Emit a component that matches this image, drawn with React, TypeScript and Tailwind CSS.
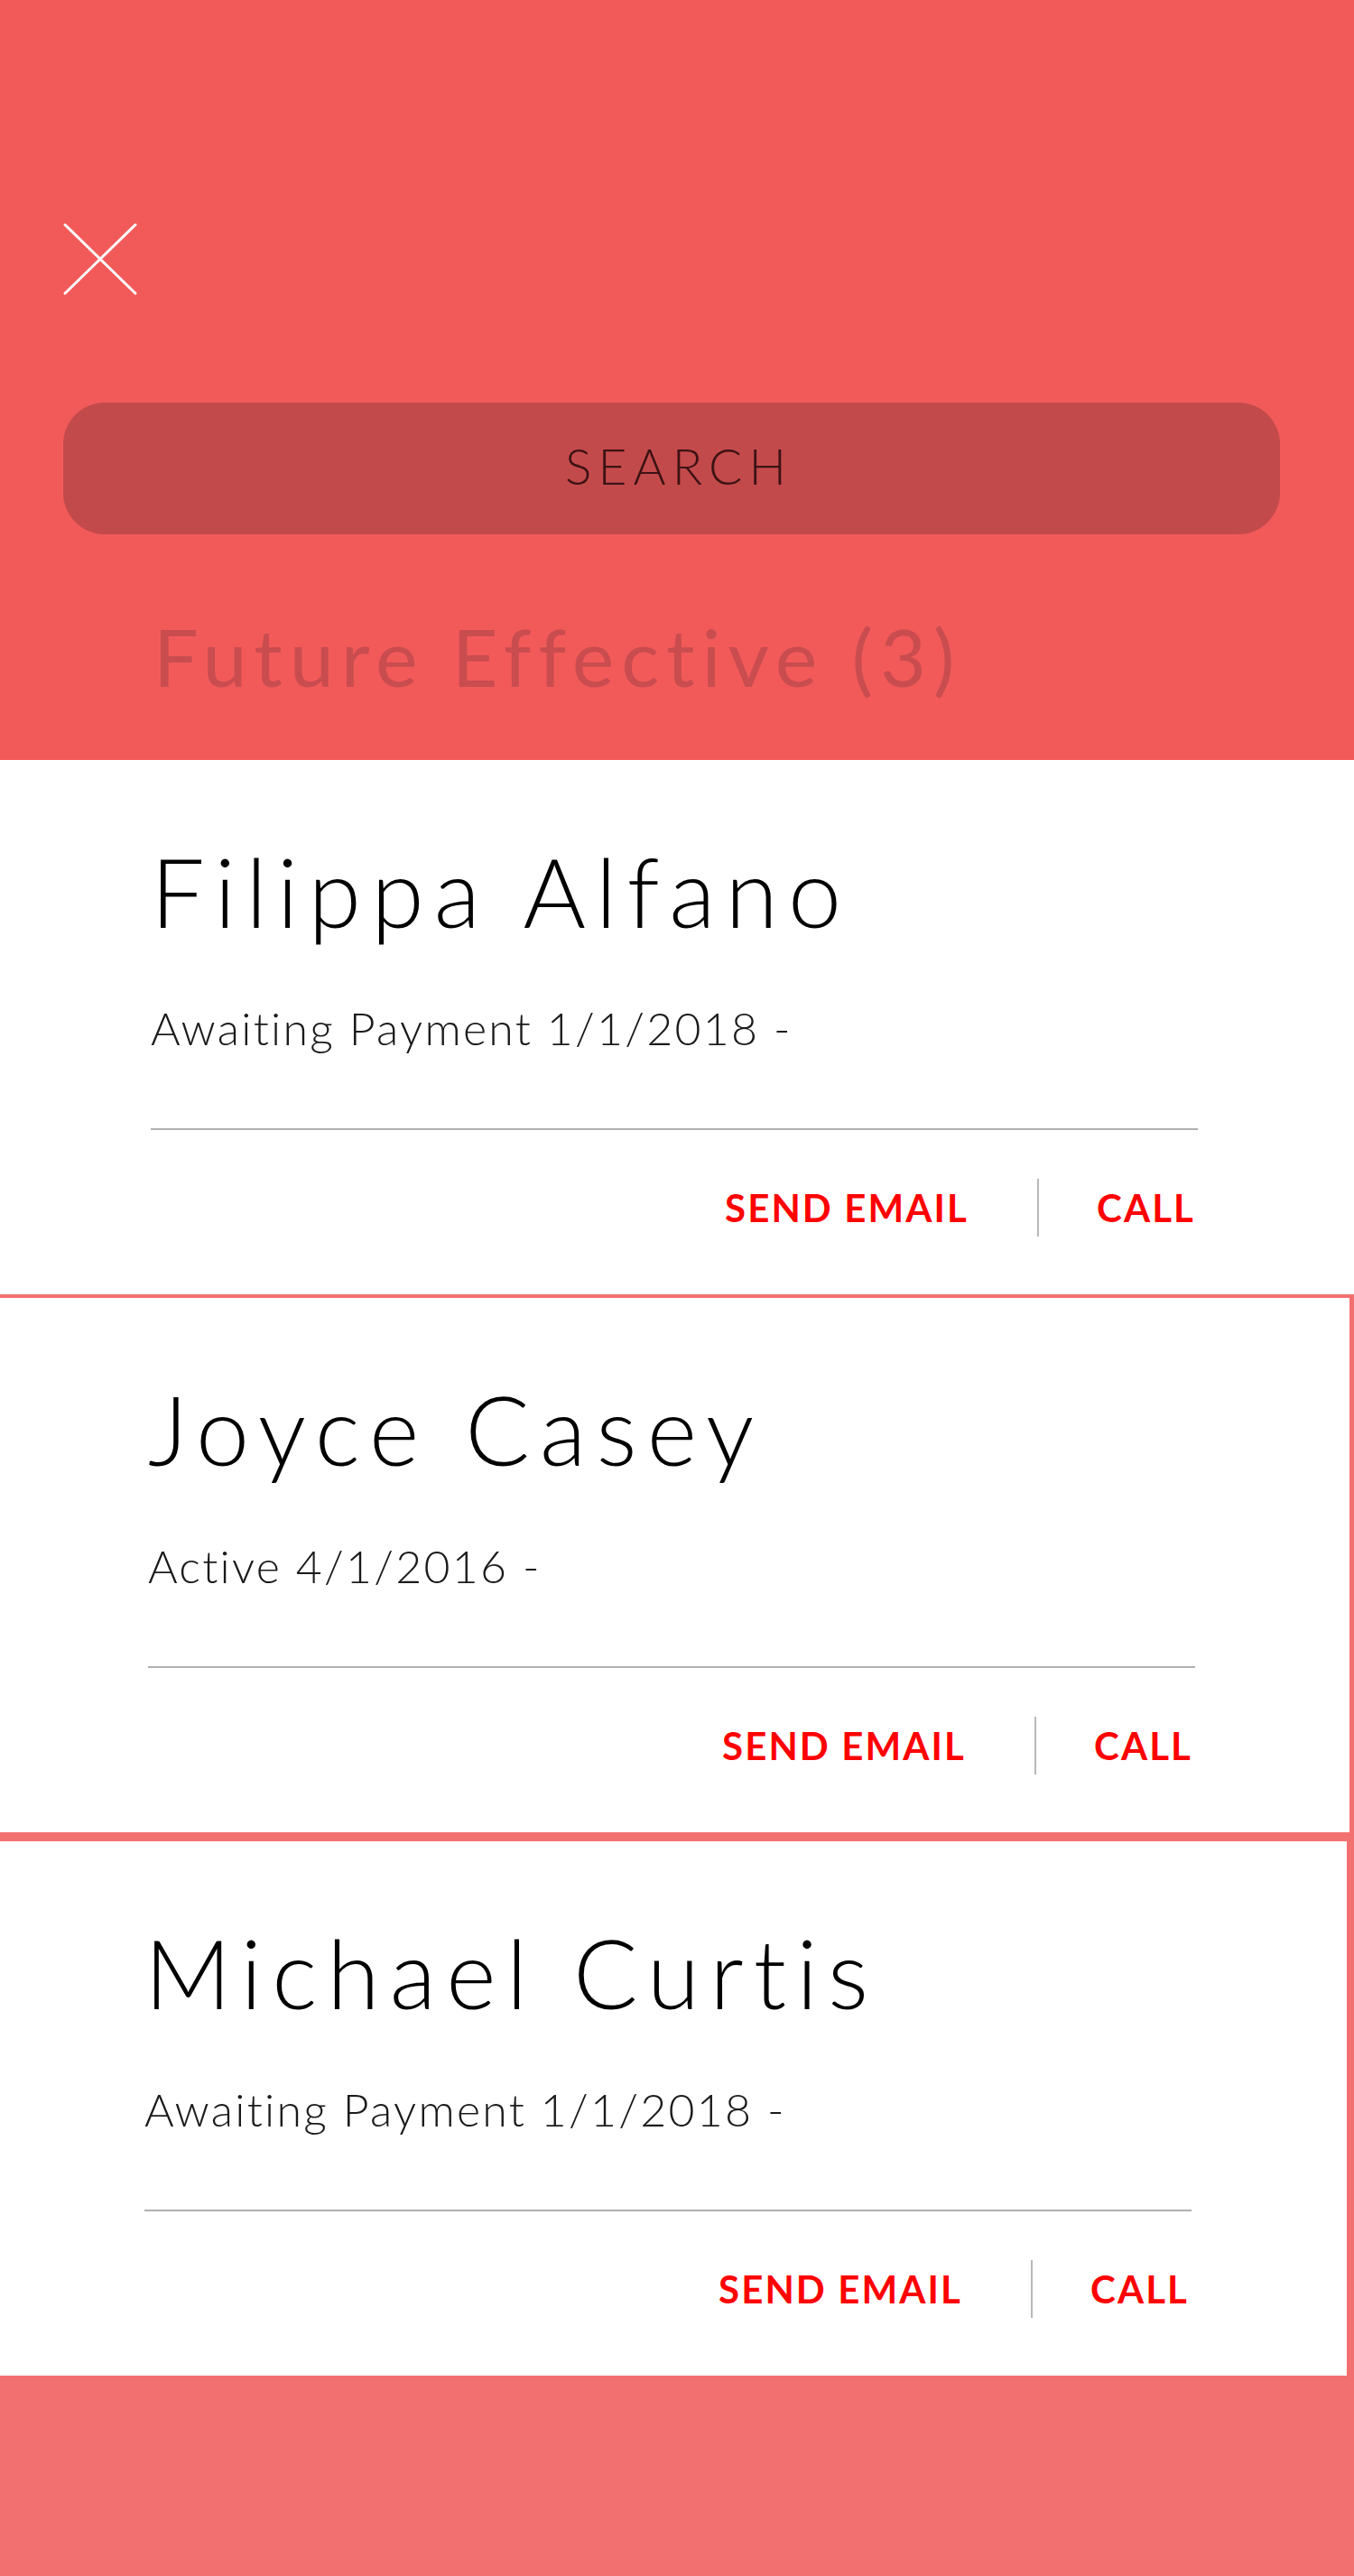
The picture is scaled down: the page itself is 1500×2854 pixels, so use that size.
import React from 'react';

interface Contact {
  name: string;
  status: string;
}

const contacts: Contact[] = [
  { name: 'Filippa Alfano', status: 'Awaiting Payment 1/1/2018 -' },
  { name: 'Joyce Casey', status: 'Active 4/1/2016 -' },
  { name: 'Michael Curtis', status: 'Awaiting Payment 1/1/2018 -' },
];

const cardStyles = [
  { card: 'w-[1500px] mt-0', pad: 'pl-[167px]' },
  { card: 'w-[1495px] mt-[4px]', pad: 'pl-[164px]' },
  { card: 'w-[1492px] mt-[10px]', pad: 'pl-[160px]' },
];

const CloseIcon: React.FC = () => (
  <svg width="82" height="80" viewBox="0 0 82 80" fill="none">
    <path d="M2 2 L80 78 M80 2 L2 78" stroke="#ffffff" strokeWidth="3" strokeLinecap="round" />
  </svg>
);

const ContactCard: React.FC<{ contact: Contact; index: number }> = ({ contact, index }) => {
  const s = cardStyles[index];
  return (
    <div className={`${s.card} h-[592px] bg-white`}>
      <div className={`${s.pad} pt-[92px]`}>
        <h2 className="text-[106px] leading-none font-light tracking-[0.105em] text-black">{contact.name}</h2>
        <p className="mt-[74px] text-[50px] leading-none font-light tracking-[0.045em] text-[#1a1a1a]">{contact.status}</p>
        <div className="mt-[86px] h-[2px] w-[1160px] bg-[#b0b0b0]" />
        <div className="mt-[54px] flex h-[64px] w-[1160px] items-center justify-end pr-[3px]">
          <button className="mr-[76px] text-[42px] leading-none font-bold tracking-[0.05em] text-[#ff0000]">
            SEND EMAIL
          </button>
          <div className="h-[64px] w-[2px] bg-[#b8b8b8]" />
          <button className="ml-[64px] text-[42px] leading-none font-bold tracking-[0.05em] text-[#ff0000]">
            CALL
          </button>
        </div>
      </div>
    </div>
  );
};

export default function App() {
  return (
    <div className="min-h-[2854px] w-[1500px] bg-[#f37070] font-['Lato','Open_Sans',sans-serif]">
      <header className="h-[842px] bg-[#f25a5a] pt-[247px] pl-[70px]">
        <CloseIcon />
        <div className="mt-[119px] flex h-[146px] w-[1348px] items-center justify-center rounded-[46px] bg-[#c34a4b] pb-[6px] pl-[16px]">
          <span className="text-[55px] leading-none font-light tracking-[0.13em] text-[#3d1214]">SEARCH</span>
        </div>
        <h1 className="mt-[91px] pl-[100px] text-[88px] leading-none font-normal tracking-[0.09em] text-[#c94c4f]">
          Future Effective (3)
        </h1>
      </header>
      <div className="flex flex-col">
        {contacts.map((c, i) => (
          <ContactCard key={c.name} contact={c} index={i} />
        ))}
      </div>
    </div>
  );
}
